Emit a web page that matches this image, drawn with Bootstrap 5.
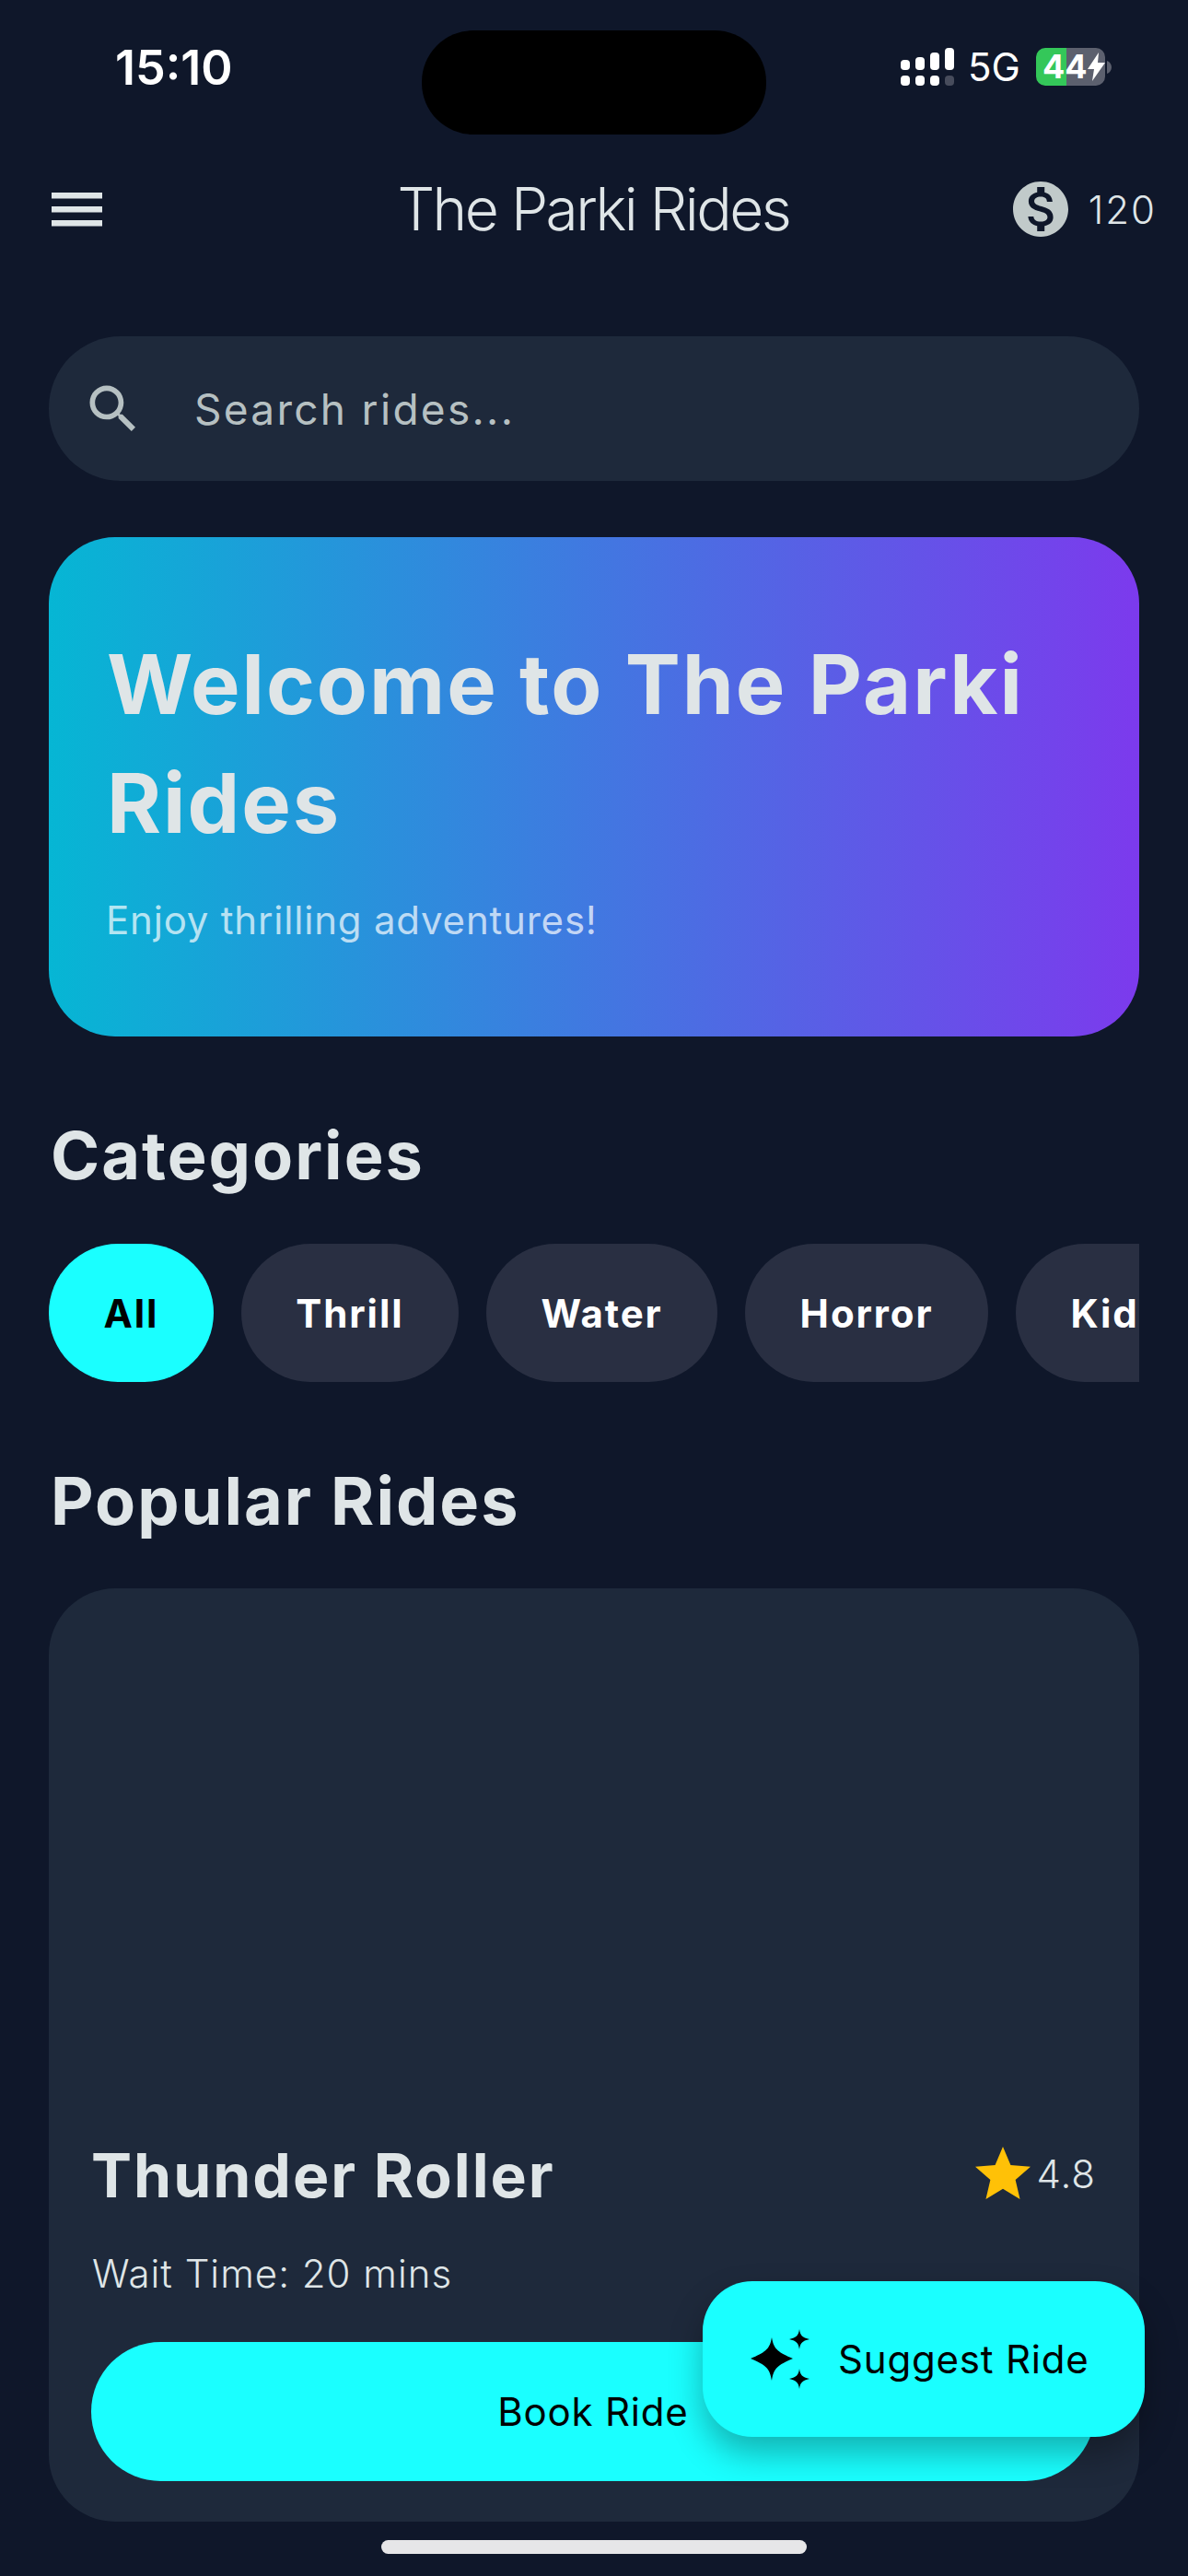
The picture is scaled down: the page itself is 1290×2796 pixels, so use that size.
<!DOCTYPE html>
<html lang="en">
<head>
    <meta charset="UTF-8">
    <meta name="viewport" content="width=device-width, initial-scale=1.0">
    <title>The Parki Rides</title>
    <link href="https://cdn.jsdelivr.net/npm/bootstrap@5.3.3/dist/css/bootstrap.min.css" rel="stylesheet">
    <script src="https://cdn.jsdelivr.net/npm/bootstrap@5.3.3/dist/js/bootstrap.bundle.min.js"></script>
    <style>
        body {
            background-color: #0f172a;
            font-family: "Inter", "Liberation Sans", sans-serif;
            color: #dfe5e7;
            margin: 0;
        }
        .app-screen {
            width: 1290px;
            height: 2796px;
            overflow: hidden;
            position: relative;
        }
        .status-row {
            display: grid;
            grid-template-columns: 458px 374px 1fr;
            padding-top: 33px;
            height: 146px;
        }
        .status-time {
            padding-left: 125px;
            padding-top: 11px;
            font-size: 52px;
            line-height: 60px;
            font-weight: 600;
            color: #fff;
        }
        .island {
            height: 113px;
            background: #000;
            border-radius: 56px;
        }
        .status-right {
            padding-left: 146px;
            padding-top: 19px;
            height: 41px;
            color: #fff;
            font-size: 42px;
            line-height: 41px;
            gap: 14px;
        }
        .battery-wrap {
            width: 83px;
            height: 41px;
            margin-left: 3px;
        }
        .battery-body {
            width: 75px;
            height: 41px;
            border-radius: 10px;
            background: linear-gradient(90deg, #34c759 44%, #5c606e 44%);
            font-size: 36px;
            font-weight: 700;
            line-height: 41px;
            padding-left: 7px;
        }
        .top-nav {
            margin-top: 31px;
            height: 100px;
            padding: 0 34px 0 56px;
        }
        .nav-title {
            flex: 1;
            text-align: center;
            font-size: 64px;
            font-weight: 300;
            letter-spacing: -2.5px;
            padding-left: 84px;
        }
        .coin-count {
            font-size: 42px;
            font-weight: 300;
            letter-spacing: 2px;
        }
        .screen-body {
            padding: 0 53px;
        }
        .search-pill {
            margin-top: 88px;
            height: 157px;
            background: #1e293b;
            border-radius: 78px;
            padding-left: 36px;
            gap: 54px;
        }
        .search-pill input {
            background: transparent;
            border: 0;
            box-shadow: none;
            padding: 2px 0 0 0;
            font-size: 46px;
            letter-spacing: 2.3px;
            color: #b6c0c2;
        }
        .search-pill input::placeholder {
            color: #b6c0c2;
            opacity: 1;
        }
        .hero-panel {
            margin-top: 61px;
            height: 542px;
            border-radius: 72px;
            padding: 95px 63px 0 63px;
            background: linear-gradient(90deg, #06b6d4 0%, #7c3aed 100%);
        }
        .hero-panel h1 {
            font-size: 90px;
            line-height: 129px;
            font-weight: 700;
            letter-spacing: 2px;
            margin: 0;
            color: #dfe5e7;
        }
        .hero-panel p {
            margin: 37px 0 0 -1px;
            font-size: 42px;
            line-height: 52px;
            letter-spacing: .8px;
            color: rgba(255, 255, 255, .7);
        }
        .sect-title {
            font-size: 72px;
            line-height: 88px;
            font-weight: 700;
            letter-spacing: 2px;
            margin: 85px 0 0 0;
            padding-left: 2px;
            color: #dfe5e7;
        }
        .chip-strip {
            gap: 30px;
            overflow: hidden;
            margin-top: 52px;
        }
        .chip-btn {
            flex: 0 0 auto;
            height: 150px;
            border-radius: 75px;
            border: 0;
            background: #292f42;
            color: #fff;
            font-size: 42px;
            font-weight: 700;
            letter-spacing: 1.9px;
            padding: 0 59.5px;
        }
        .chip-btn.chip-on {
            background: #1affff;
            color: #000;
        }
        .ride-panel {
            margin-top: 51px;
            height: 1013px;
            background: #1e293b;
            border-radius: 72px;
            border: 0;
            color: #dfe5e7;
        }
        .ride-cover {
            height: 597px;
        }
        .ride-body {
            padding: 0 48px 0 46px;
        }
        .ride-name {
            font-size: 66px;
            line-height: 80px;
            font-weight: 700;
            letter-spacing: 2px;
            margin: 0;
        }
        .ride-score {
            font-size: 42px;
            font-weight: 300;
            letter-spacing: 1px;
            margin: -3px -1px 0 0;
        }
        .ride-wait {
            font-size: 42px;
            line-height: 52px;
            font-weight: 300;
            letter-spacing: 1px;
            margin: 41px 0 0 0;
            padding-left: 1px;
        }
        .book-btn {
            display: block;
            width: 100%;
            height: 151px;
            margin-top: 48px;
            border-radius: 76px;
            border: 0;
            background: #1affff;
            color: #000;
            font-size: 42px;
            font-weight: 400;
            letter-spacing: .8px;
        }
        .fab-suggest {
            position: absolute;
            left: 763px;
            top: 2476px;
            width: 480px;
            height: 169px;
            border-radius: 54px;
            border: 0;
            background: #1affff;
            color: #000;
            font-size: 42px;
            font-weight: 400;
            letter-spacing: .8px;
            padding-left: 52px;
            gap: 29px;
            box-shadow: 0 18px 36px rgba(0, 0, 0, .3);
        }
        .home-bar {
            position: absolute;
            left: 414px;
            top: 2757px;
            width: 462px;
            height: 15px;
            border-radius: 8px;
            background: #e6e6e8;
        }
    </style>
</head>
<body>
    <div class="app-screen">
        <div class="status-row">
            <div class="status-time">15:10</div>
            <div class="island"></div>
            <div class="status-right d-flex align-items-start">
                <svg width="59" height="41" viewBox="0 0 59 41" fill="#fff">
                    <rect x="0" y="13" width="10" height="11" rx="4"/>
                    <rect x="16" y="10" width="10" height="14" rx="4"/>
                    <rect x="32" y="5" width="10" height="19" rx="4"/>
                    <rect x="48" y="0" width="10" height="24" rx="4"/>
                    <rect x="0" y="30" width="10" height="11" rx="4"/>
                    <rect x="16" y="30" width="10" height="11" rx="4"/>
                    <rect x="32" y="30" width="10" height="11" rx="4"/>
                    <rect x="48" y="30" width="10" height="11" rx="4" fill="#474c5c"/>
                </svg>
                <span>5G</span>
                <div class="battery-wrap d-flex align-items-center">
                    <div class="battery-body d-flex align-items-center">
                        <span>44</span>
                        <svg width="19" height="31" viewBox="0 0 19 31" fill="#fff"><path d="M12 0 0 18h7L5 31 19 11h-8z"/></svg>
                    </div>
                    <svg width="8" height="14" viewBox="0 0 8 14" fill="#5c606e"><path d="M2 0c3 1 5 4 5 7s-2 6-5 7z"/></svg>
                </div>
            </div>
        </div>

        <nav class="top-nav d-flex align-items-center">
            <svg width="55" height="37" viewBox="0 0 55 37" fill="#dfe5e7">
                <rect y="0" width="55" height="6.5"/>
                <rect y="15" width="55" height="6.5"/>
                <rect y="30" width="55" height="6.5"/>
            </svg>
            <div class="nav-title">The Parki Rides</div>
            <div class="d-flex align-items-center coin-count">
                <svg width="72" height="72" viewBox="0 0 24 24" fill="#c1caca"><path d="M12 2C6.48 2 2 6.48 2 12s4.48 10 10 10 10-4.48 10-10S17.52 2 12 2zm1.41 16.09V20h-2.67v-1.93c-1.71-.36-3.16-1.46-3.27-3.4h1.96c.1 1.05.82 1.87 2.65 1.87 1.96 0 2.4-.98 2.4-1.59 0-.83-.44-1.61-2.67-2.14-2.48-.6-4.18-1.62-4.18-3.67 0-1.72 1.39-2.84 3.11-3.21V4h2.67v1.95c1.86.45 2.79 1.86 2.87 3.39H14.3c-.05-1.11-.64-1.87-2.22-1.87-1.5 0-2.4.68-2.4 1.64 0 .84.65 1.39 2.67 1.91s4.18 1.39 4.18 3.91c-.01 1.83-1.38 2.83-3.12 3.16z"/></svg>
                <span class="ms-3">120</span>
            </div>
        </nav>

        <div class="screen-body">
            <div class="search-pill d-flex align-items-center">
                <svg width="76" height="76" viewBox="0 0 24 24" fill="#b6c0c2"><path d="M15.5 14h-.79l-.28-.27C15.41 12.59 16 11.11 16 9.5 16 5.91 13.09 3 9.5 3S3 5.91 3 9.5 5.91 16 9.5 16c1.61 0 3.09-.59 4.23-1.57l.27.28v.79l5 4.99L20.49 19l-4.99-5zm-6 0C7.01 14 5 11.99 5 9.5S7.01 5 9.5 5 14 7.01 14 9.5 11.99 14 9.5 14z"/></svg>
                <input type="text" class="form-control" placeholder="Search rides...">
            </div>

            <div class="hero-panel">
                <h1>Welcome to The Parki Rides</h1>
                <p>Enjoy thrilling adventures!</p>
            </div>

            <h2 class="sect-title">Categories</h2>
            <div class="chip-strip d-flex">
                <button class="chip-btn chip-on">All</button>
                <button class="chip-btn">Thrill</button>
                <button class="chip-btn">Water</button>
                <button class="chip-btn">Horror</button>
                <button class="chip-btn">Kids</button>
            </div>

            <h2 class="sect-title">Popular Rides</h2>
            <div class="card ride-panel">
                <div class="ride-cover"></div>
                <div class="ride-body">
                    <div class="d-flex justify-content-between align-items-center">
                        <h3 class="ride-name">Thunder Roller</h3>
                        <div class="ride-score d-flex align-items-center">
                            <svg width="72" height="72" viewBox="0 0 24 24" fill="#ffc107"><path d="M12 17.27 18.18 21l-1.64-7.03L22 9.24l-7.19-.61L12 2 9.19 8.63 2 9.24l5.46 4.73L5.82 21z"/></svg>
                            <span>4.8</span>
                        </div>
                    </div>
                    <p class="ride-wait">Wait Time: 20 mins</p>
                    <button class="book-btn">Book Ride</button>
                </div>
            </div>
        </div>

        <button class="fab-suggest d-flex align-items-center">
            <svg width="66" height="66" viewBox="0 0 66 66" fill="#000">
                <path d="M23 9C25 21 29 25 46 32 29 39 25 43 23 56 21 43 17 39 0 32 17 25 21 21 23 9Z"/>
                <path d="M53 0C54 7 56 9 64 11 56 13 54 15 53 22 52 15 50 13 42 11 50 9 52 7 53 0Z"/>
                <path d="M53 43C54 50 56 52 64 54 56 56 54 58 53 65 52 58 50 56 42 54 50 52 52 50 53 43Z"/>
            </svg>
            <span>Suggest Ride</span>
        </button>
        <div class="home-bar"></div>
    </div>
</body>
</html>
